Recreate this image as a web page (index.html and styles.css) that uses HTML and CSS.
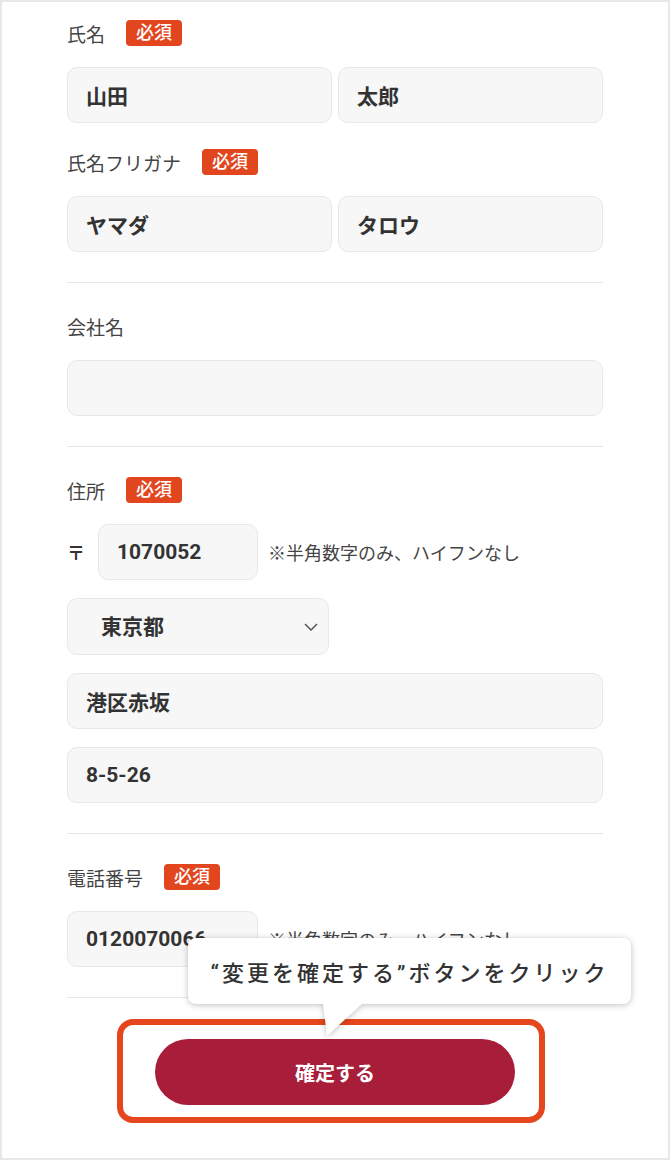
FILE: index.html
```html
<!DOCTYPE html>
<html lang="ja">
<head>
    <meta charset="UTF-8">
    <meta name="viewport" content="width=device-width, initial-scale=1.0">
    <title>お客様情報の変更</title>
    <link rel="stylesheet" href="styles.css">
</head>
<body>
    <div class="frame">
        <form class="form">
            <div class="section">
                <div class="field">
                    <div class="label-row"><span class="label">氏名</span><span class="badge">必須</span></div>
                    <div class="pair">
                        <input class="input" type="text" value="山田">
                        <input class="input" type="text" value="太郎">
                    </div>
                </div>
                <div class="field">
                    <div class="label-row"><span class="label">氏名フリガナ</span><span class="badge">必須</span></div>
                    <div class="pair">
                        <input class="input" type="text" value="ヤマダ">
                        <input class="input" type="text" value="タロウ">
                    </div>
                </div>
            </div>

            <div class="section">
                <div class="field">
                    <div class="label-row"><span class="label">会社名</span></div>
                    <input class="input" type="text" value="">
                </div>
            </div>

            <div class="section">
                <div class="field">
                    <div class="label-row"><span class="label">住所</span><span class="badge">必須</span></div>
                    <div class="stack">
                        <div class="inline-row">
                            <span class="postal-mark">〒</span>
                            <input class="input input-postal" type="text" value="1070052">
                            <span class="note">※半角数字のみ、ハイフンなし</span>
                        </div>
                        <div class="select-wrap">
                            <select class="input select">
                                <option>東京都</option>
                                <option>神奈川県</option>
                                <option>大阪府</option>
                            </select>
                            <svg class="chevron" width="14" height="8" viewBox="0 0 14 8"><path d="M1 1l6 6 6-6" fill="none" stroke="#555" stroke-width="1.5"/></svg>
                        </div>
                        <input class="input" type="text" value="港区赤坂">
                        <input class="input" type="text" value="8-5-26">
                    </div>
                </div>
            </div>

            <div class="section">
                <div class="field">
                    <div class="label-row"><span class="label">電話番号</span><span class="badge">必須</span></div>
                    <div class="inline-row">
                        <input class="input input-tel" type="text" value="0120070066">
                        <span class="note">※半角数字のみ、ハイフンなし</span>
                    </div>
                </div>
            </div>

            <div class="submit-area">
                <button type="submit" class="submit">確定する</button>
                <div class="highlight"></div>
                <div class="tooltip">“変更を確定する”ボタンをクリック</div>
            </div>
        </form>
    </div>
</body>
</html>
```

FILE: styles.css
```css
body {
    margin: 0;
    font-family: Roboto, "Noto Sans CJK JP", sans-serif;
    background-color: #fff;
    color: #333;
}

.frame {
    width: 670px;
    height: 1160px;
    box-sizing: border-box;
    border: 2px solid #e8e8e8;
    padding: 18px 65px 0 65px;
    overflow: hidden;
}

.section {
    padding: 30px 0 30px;
    border-bottom: 1px solid #e6e6e6;
}

.section:first-child {
    padding-top: 0;
}

.field + .field {
    margin-top: 26px;
}

.label-row {
    display: flex;
    align-items: center;
    height: 26px;
    margin-bottom: 21px;
}

.label {
    font-size: 19px;
    color: #444;
    margin-right: 21px;
}

.badge {
    display: inline-flex;
    align-items: center;
    justify-content: center;
    width: 56px;
    height: 26px;
    border-radius: 4px;
    background-color: #e2461f;
    color: #fff;
    font-size: 18px;
    font-weight: 500;
    line-height: 1;
}

.pair {
    display: flex;
    gap: 6px;
}

.input {
    display: block;
    width: 100%;
    height: 56px;
    box-sizing: border-box;
    padding: 0 18px;
    border: 1px solid #e8e8e8;
    border-radius: 10px;
    background-color: #f7f7f7;
    font-family: inherit;
    font-size: 21px;
    font-weight: 700;
    color: #333;
    outline: none;
}

.stack {
    display: flex;
    flex-direction: column;
    gap: 18px;
}

.inline-row {
    display: flex;
    align-items: center;
}

.postal-mark {
    width: 31px;
    font-size: 18px;
    font-weight: 700;
    color: #333;
}

.input-postal {
    width: 160px;
}

.input-tel {
    width: 191px;
}

.note {
    margin-left: 10px;
    font-size: 18px;
    color: #444;
}

.select-wrap {
    position: relative;
    width: 262px;
}

.select {
    appearance: none;
    -webkit-appearance: none;
    height: 57px;
    padding-left: 33px;
}

.chevron {
    position: absolute;
    right: 11px;
    top: 25px;
}

.submit-area {
    position: relative;
    display: flex;
    justify-content: center;
    padding-top: 41px;
}

.submit {
    width: 360px;
    height: 66px;
    border: none;
    border-radius: 33px;
    background-color: #a81d39;
    color: #fff;
    font-family: inherit;
    font-size: 20px;
    font-weight: 700;
    cursor: pointer;
}

.highlight {
    position: absolute;
    left: 50px;
    top: 21px;
    width: 428px;
    height: 104px;
    box-sizing: border-box;
    border: 6px solid #e5461d;
    border-radius: 16px;
    pointer-events: none;
}

.tooltip {
    position: absolute;
    left: 121px;
    top: -60px;
    width: 443px;
    height: 66px;
    box-sizing: border-box;
    display: flex;
    align-items: center;
    justify-content: center;
    background-color: #fff;
    border-radius: 8px;
    font-size: 22px;
    font-weight: 500;
    letter-spacing: 3px;
    color: #333;
    filter: drop-shadow(0 1px 3px rgba(0, 0, 0, 0.25));
}

.tooltip::after {
    content: "";
    position: absolute;
    left: 135px;
    top: 65px;
    width: 40px;
    height: 33px;
    background-color: #fff;
    clip-path: polygon(0 0, 100% 0, 10% 100%);
}
```
